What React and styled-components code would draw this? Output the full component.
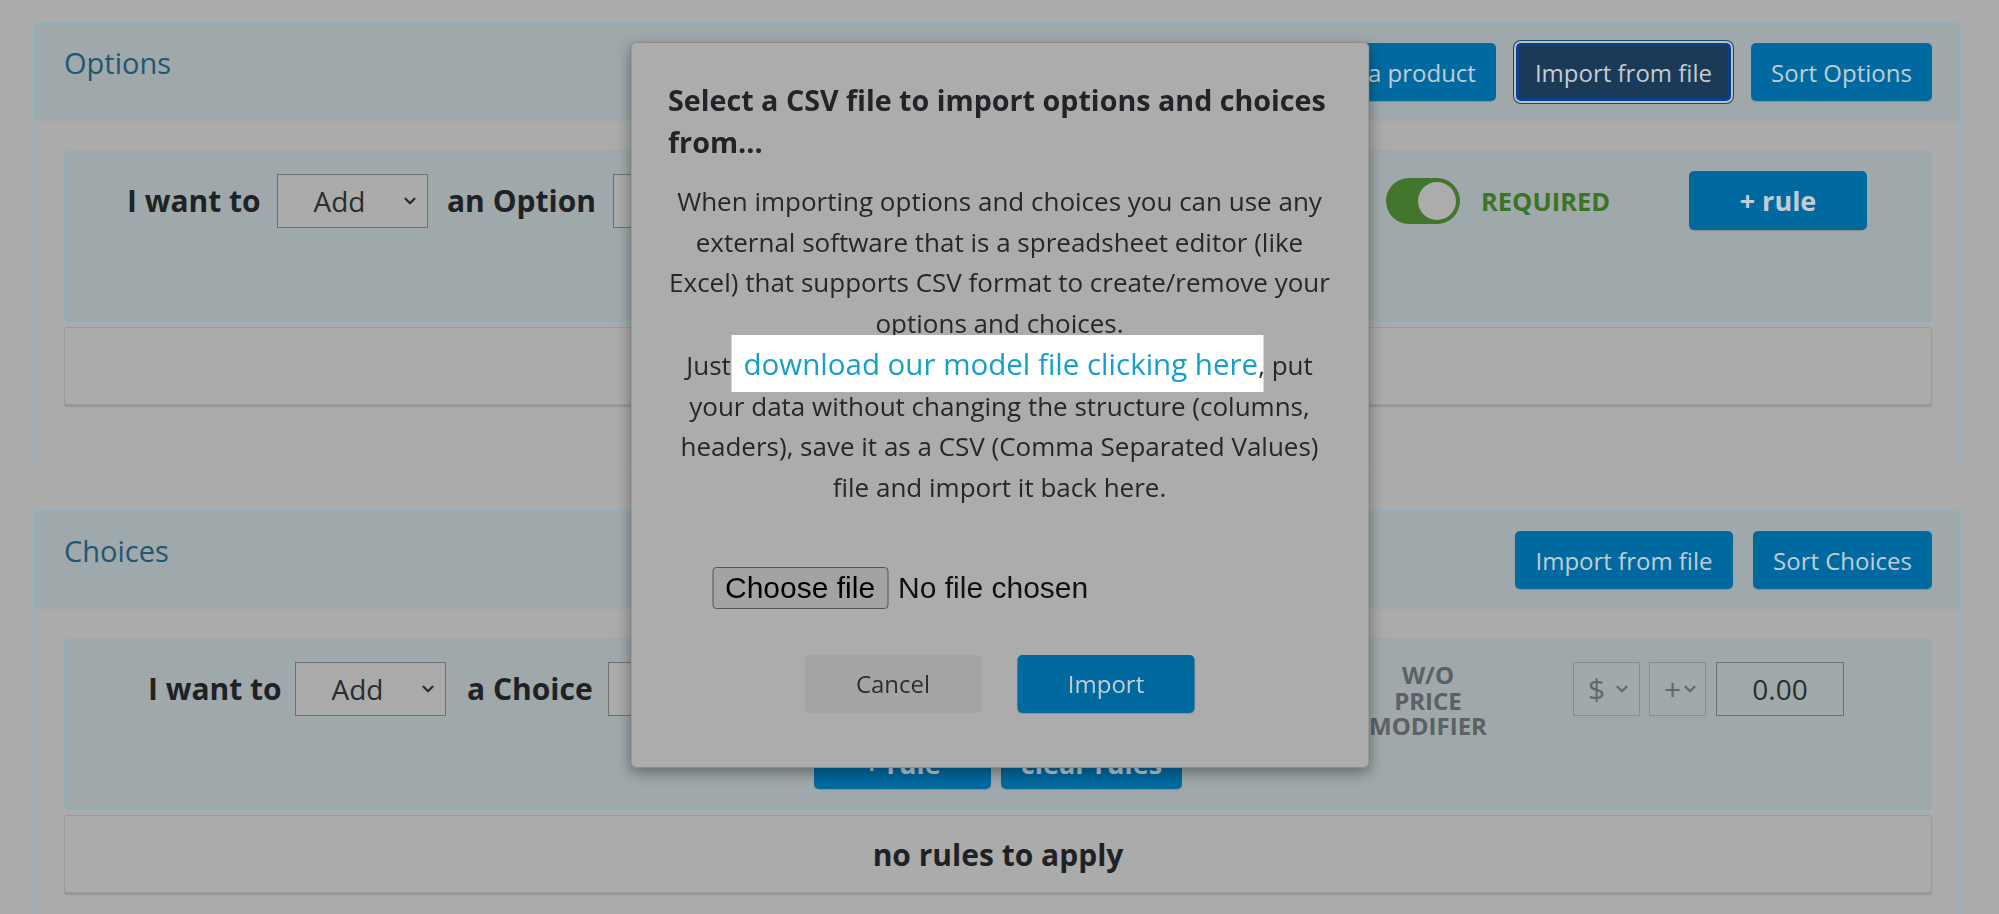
import React from "react";
import styled, { createGlobalStyle } from "styled-components";
import { ChevronDown } from "lucide-react";

const GlobalStyle = createGlobalStyle`
  * { box-sizing: border-box; }
  html, body {
    margin: 0;
    padding: 0;
    background: #ababab;
  }
  body {
    font-family: "Open Sans", "Liberation Sans", sans-serif;
    color: #25272a;
    overflow: hidden;
  }
`;

const Page = styled.div`
  height: 914px;
  overflow: hidden;
  padding: 22px 38px 0 34px;
`;

const Panel = styled.section`
  border: 1px solid #8fb3bd;
  border-radius: 5px;
  background: #ababab;
  margin-bottom: 40px;
`;

const PanelHeader = styled.header`
  display: flex;
  align-items: flex-start;
  justify-content: space-between;
  height: 98px;
  padding: 20px 28px 0 29px;
  background: #9fa8ab;
  border-radius: 5px 5px 0 0;
`;

const PanelTitle = styled.h2`
  margin: 0;
  font-size: 29px;
  line-height: 40px;
  font-weight: 400;
  color: #235670;
`;

const HeaderActions = styled.div`
  display: flex;
  gap: 20px;
`;

const Button = styled.button`
  height: ${(p) => p.$h || 58}px;
  min-width: ${(p) => p.$w || 0}px;
  padding: 0 20px;
  border: 0;
  border-radius: 5px;
  background: #006aa0;
  color: #c3ccd2;
  font-family: inherit;
  font-size: ${(p) => (p.$bold ? 27 : 24)}px;
  font-weight: ${(p) => (p.$bold ? 700 : 400)};
  cursor: pointer;
  box-shadow: 0 1px 1px rgba(0, 0, 0, 0.15);

  &.focused {
    padding: 0 16px;
    background: #1b3a58;
    border: 3px solid #0b3f8a;
    box-shadow: 0 0 0 2px #b6c1c8, 0 0 0 3px #124c6c;
  }
`;

const PanelBody = styled.div`
  padding: 28px 28px 64px 29px;
`;

const RuleBuilder = styled.div`
  height: 174px;
  border: 1px solid #8fb2bc;
  border-radius: 6px;
  background: #9fa8ab;
  padding-top: 24px;
`;

const RuleRow = styled.div`
  display: flex;
  align-items: center;
  height: 53px;
  padding-left: ${(p) => p.$indent}px;
`;

const Label = styled.span`
  flex: none;
  width: ${(p) => p.$w}px;
  margin-left: ${(p) => p.$ml || 0}px;
  font-size: ${(p) => p.$size || 30}px;
  font-weight: 700;
  color: ${(p) => p.$color || "#1f2224"};
  white-space: nowrap;
`;

const FakeSelect = styled.div`
  flex: none;
  display: flex;
  align-items: center;
  width: ${(p) => p.$w}px;
  height: 54px;
  margin-left: ${(p) => p.$ml || 0}px;
  padding: 0 8px 0 ${(p) => (p.$center ? 0 : 14)}px;
  border: 1px solid ${(p) => (p.$disabled ? "#878c8f" : "#6f6f6f")};
  background: ${(p) => (p.$disabled ? "#a0a9ac" : "#ababab")};
  color: ${(p) => (p.$disabled ? "#62676a" : "#2b2d2f")};
  font-size: ${(p) => (p.$disabled ? 30 : 28)}px;

  span {
    flex: 1;
    text-align: ${(p) => (p.$center ? "center" : "left")};
  }
  svg {
    flex: none;
  }
`;

const TextInput = styled.div`
  flex: none;
  width: ${(p) => p.$w}px;
  height: 54px;
  margin-left: ${(p) => p.$ml || 0}px;
  border: 1px solid #6f6f6f;
  background: ${(p) => p.$bg || "#ababab"};
  color: #2b2d2f;
  font-size: 28px;
  line-height: 52px;
  text-align: center;
`;

const Toggle = styled.div`
  flex: none;
  display: flex;
  justify-content: flex-end;
  width: 74px;
  height: 46px;
  margin-left: ${(p) => p.$ml}px;
  padding: 4px;
  border-radius: 23px;
  background: #41762c;

  &::after {
    content: "";
    width: 38px;
    height: 38px;
    border-radius: 50%;
    background: #acacac;
  }
`;

const PriceLabel = styled.div`
  flex: none;
  width: 130px;
  margin-left: ${(p) => p.$ml}px;
  align-self: flex-start;
  margin-top: 0;
  font-size: 24px;
  line-height: 25.5px;
  font-weight: 700;
  text-align: center;
  color: #5d6163;

  span {
    display: block;
  }
`;

const CenterActions = styled.div`
  display: flex;
  justify-content: center;
  gap: 10px;
  margin-top: 22px;
`;

const RulesBox = styled.div`
  height: 78px;
  margin-top: 4px;
  border: 1px solid #9a9a9a;
  border-radius: 3px;
  background: #ababab;
  box-shadow: 0 2px 1px rgba(0, 0, 0, 0.12);
  display: flex;
  align-items: center;
  justify-content: center;
  font-size: 30px;
  font-weight: 700;
  color: #1f2224;
`;

const Modal = styled.div`
  position: fixed;
  top: 42px;
  left: 50%;
  transform: translateX(-50%);
  width: 739px;
  padding: 36px 37px 54px;
  border: 1px solid rgba(0, 0, 0, 0.18);
  border-radius: 6px;
  background: #acacac;
  box-shadow: 0 5px 14px rgba(0, 0, 0, 0.35);
`;

const ModalTitle = styled.h3`
  margin: 0 0 18px;
  font-size: 28.7px;
  line-height: 42px;
  font-weight: 700;
  color: #222427;
  white-space: nowrap;
`;

const ModalText = styled.p`
  margin: 0;
  font-size: 26px;
  line-height: 40.7px;
  text-align: center;
  color: #25272a;
  white-space: nowrap;
`;

const Spotlight = styled.a`
  margin: 0 -5px 0 -6px;
  padding: 8px 5px 8px 12px;
  background: #ffffff;
  color: #14a0c8;
  font-size: 29.5px;
  text-decoration: none;
`;

const FileRow = styled.label`
  display: flex;
  align-items: center;
  margin: 59px 0 0 44px;
  height: 42px;
  font-family: "Liberation Sans", Arial, sans-serif;
  font-size: 30px;
  color: #111;

  input {
    display: none;
  }
`;

const FileButton = styled.span`
  display: flex;
  align-items: center;
  height: 42px;
  padding: 0 12px;
  margin-right: 10px;
  border: 1px solid #545454;
  border-radius: 4px;
  background: #a3a3a3;
  color: #000;
`;

const ModalActions = styled.div`
  display: flex;
  justify-content: center;
  gap: 36px;
  margin-top: 46px;
`;

const CancelButton = styled(Button)`
  background: #a4a4a4;
  color: #2c2e30;
  box-shadow: none;
`;

const Chevron = () => <ChevronDown size={18} strokeWidth={3} color="#2b2d2f" />;
const DimChevron = () => <ChevronDown size={18} strokeWidth={3} color="#62676a" />;

export default function App() {
  return (
    <>
      <GlobalStyle />
      <Page>
        <Panel>
          <PanelHeader>
            <PanelTitle>Options</PanelTitle>
            <HeaderActions>
              <Button>Copy from a product</Button>
              <Button className="focused" $w={214}>Import from file</Button>
              <Button $w={181}>Sort Options</Button>
            </HeaderActions>
          </PanelHeader>
          <PanelBody>
            <RuleBuilder>
              <RuleRow $indent={62}>
                <Label $w={150}>I want to</Label>
                <FakeSelect $w={151} $center>
                  <span>Add</span>
                  <Chevron />
                </FakeSelect>
                <Label $w={166} $ml={19}>an Option</Label>
                <TextInput $w={690} />
                <Toggle $ml={83} />
                <Label $w={208} $ml={21} $size={25.5} $color="#3b7524">REQUIRED</Label>
                <Button $bold $w={178} $h={59}>+ rule</Button>
              </RuleRow>
            </RuleBuilder>
            <RulesBox>no rules to apply</RulesBox>
          </PanelBody>
        </Panel>

        <Panel>
          <PanelHeader>
            <PanelTitle>Choices</PanelTitle>
            <HeaderActions>
              <Button $w={218}>Import from file</Button>
              <Button $w={179}>Sort Choices</Button>
            </HeaderActions>
          </PanelHeader>
          <PanelBody>
            <RuleBuilder>
              <RuleRow $indent={83}>
                <Label $w={147}>I want to</Label>
                <FakeSelect $w={151} $center>
                  <span>Add</span>
                  <Chevron />
                </FakeSelect>
                <Label $w={141} $ml={21}>a Choice</Label>
                <TextInput $w={690} />
                <PriceLabel $ml={65}>
                  <span>W/O</span>
                  <span>PRICE</span>
                  <span>MODIFIER</span>
                </PriceLabel>
                <FakeSelect $w={67} $ml={80} $disabled>
                  <span>$</span>
                  <DimChevron />
                </FakeSelect>
                <FakeSelect $w={57} $ml={9} $disabled>
                  <span>+</span>
                  <DimChevron />
                </FakeSelect>
                <TextInput $w={128} $ml={10} $bg="#a0a9ac">0.00</TextInput>
              </RuleRow>
              <CenterActions>
                <Button $bold $w={177} $h={52}>+ rule</Button>
                <Button $bold $w={177} $h={52}>clear rules</Button>
              </CenterActions>
            </RuleBuilder>
            <RulesBox>no rules to apply</RulesBox>
          </PanelBody>
        </Panel>
      </Page>

      <Modal role="dialog">
        <ModalTitle>
          Select a CSV file to import options and choices
          <br />
          from...
        </ModalTitle>
        <ModalText>
          When importing options and choices you can use any
          <br />
          external software that is a spreadsheet editor (like
          <br />
          Excel) that supports CSV format to create/remove your
          <br />
          options and choices.
          <br />
          Just <Spotlight href="#model">download our model file clicking here</Spotlight>, put
          <br />
          your data without changing the structure (columns,
          <br />
          headers), save it as a CSV (Comma Separated Values)
          <br />
          file and import it back here.
        </ModalText>
        <FileRow>
          <input type="file" accept=".csv" />
          <FileButton>Choose file</FileButton>
          No file chosen
        </FileRow>
        <ModalActions>
          <CancelButton $w={177}>Cancel</CancelButton>
          <Button $w={177}>Import</Button>
        </ModalActions>
      </Modal>
    </>
  );
}
